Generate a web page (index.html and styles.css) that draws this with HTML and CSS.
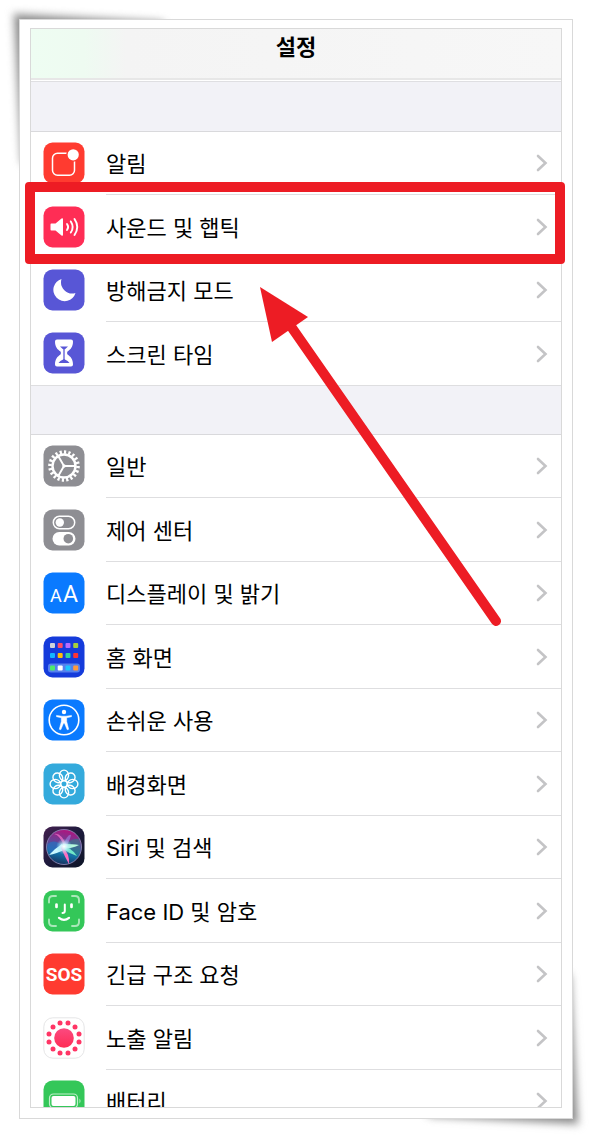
FILE: index.html
```html
<!DOCTYPE html>
<html lang="ko">
<head>
    <meta charset="UTF-8">
    <meta name="viewport" content="width=device-width, initial-scale=1.0">
    <title>설정</title>
    <link rel="stylesheet" href="styles.css">
</head>
<body>
<!-- Símbolos compartidos -->
<svg class="defs" width="0" height="0" aria-hidden="true">
    <defs>
        <symbol id="chevron" viewBox="0 0 12 18">
            <path d="M2 2 L9.500 9 L2 16" fill="none" stroke="#c4c4c6" stroke-width="2.600" stroke-linecap="round" stroke-linejoin="miter"/>
        </symbol>
        <ellipse id="petal" cx="21" cy="12.300" rx="4.600" ry="5.200"/>
        <linearGradient id="siriBg" x1="0" y1="0" x2="1" y2="1">
            <stop offset="0" stop-color="#43204f"/>
            <stop offset="0.500" stop-color="#1d1a3c"/>
            <stop offset="1" stop-color="#0d1526"/>
        </linearGradient>
        <linearGradient id="siriOrb" x1="0.600" y1="0" x2="0.400" y2="1">
            <stop offset="0" stop-color="#b3127e"/>
            <stop offset="0.450" stop-color="#5a4b9b"/>
            <stop offset="0.700" stop-color="#1272a8"/>
            <stop offset="1" stop-color="#17315e"/>
        </linearGradient>
        <radialGradient id="siriGlow">
            <stop offset="0" stop-color="#ffffff"/>
            <stop offset="0.350" stop-color="#d5f6ff" stop-opacity="0.850"/>
            <stop offset="1" stop-color="#7fd8f0" stop-opacity="0"/>
        </radialGradient>
        <linearGradient id="exposure" x1="0" y1="0" x2="0" y2="1">
            <stop offset="0" stop-color="#fb4a80"/>
            <stop offset="1" stop-color="#ff2d55"/>
        </linearGradient>
    </defs>
</svg>

<div class="frame">
    <main class="screen">
        <header class="header">
            <h1>설정</h1>
        </header>

        <ul class="group">
            <li><a class="row" href="#">
                <svg class="icon" viewBox="0 0 42 42">
                    <rect class="tile red" x="0.500" y="0.500" width="41" height="41" rx="9"/>
                    <rect x="9.500" y="11.300" width="22" height="22" rx="5" fill="none" stroke="#fff" stroke-width="1.500"/>
                    <circle cx="30.200" cy="12.800" r="7" fill="#ff3b30"/>
                    <circle cx="30.200" cy="12.800" r="5.600" fill="#fff"/>
                </svg>
                <span class="label">알림<svg class="chevron"><use href="#chevron"/></svg></span>
            </a></li>
            <li><a class="row" href="#">
                <svg class="icon" viewBox="0 0 42 42">
                    <rect class="tile pink" x="0.500" y="0.500" width="41" height="41" rx="9"/>
                    <path d="M8.300 17.500 H12.500 L18.500 12.600 Q20 11.700 20 13.500 V28.500 Q20 30.300 18.500 29.400 L12.500 24.500 H8.300 Q7.500 24.500 7.500 23.500 V18.500 Q7.500 17.500 8.300 17.500Z" fill="#fff"/>
                    <g fill="none" stroke="#fff" stroke-width="1.900" stroke-linecap="round">
                        <path d="M24 18 Q26.300 21 24 24"/>
                        <path d="M27.800 15.400 Q31.500 21 27.800 26.600"/>
                        <path d="M31.500 13 Q37 21 31.500 29"/>
                    </g>
                </svg>
                <span class="label">사운드 및 햅틱<svg class="chevron"><use href="#chevron"/></svg></span>
            </a></li>
            <li><a class="row" href="#">
                <svg class="icon" viewBox="0 0 42 42">
                    <rect class="tile purple" x="0.500" y="0.500" width="41" height="41" rx="9"/>
                    <path d="M18.500 10 A11.300 11.300 0 1 0 32.500 24 A11.300 11.300 0 0 1 18.500 10Z" fill="#fff"/>
                </svg>
                <span class="label">방해금지 모드<svg class="chevron"><use href="#chevron"/></svg></span>
            </a></li>
            <li><a class="row" href="#">
                <svg class="icon" viewBox="0 0 42 42">
                    <rect class="tile purple" x="0.500" y="0.500" width="41" height="41" rx="9"/>
                    <path d="M14 7.500 H28 Q30 7.500 30 9.500 C30 15 27.500 17.500 24.500 19.500 Q23.500 21 24.500 22.500 C27.500 24.500 30 27 30 32.500 Q30 34.500 28 34.500 H14 Q12 34.500 12 32.500 C12 27 14.500 24.500 17.500 22.500 Q18.500 21 17.500 19.500 C14.500 17.500 12 15 12 9.500 Q12 7.500 14 7.500Z" fill="#fff"/>
                    <path d="M17 14.500 H25 L22 17.200 H20Z M15.500 31 Q16.500 28.800 21 27 Q25.500 28.800 26.500 31Z" fill="#5856d6"/>
                    <path d="M21 15 V29" stroke="#5856d6" stroke-width="1.300"/>
                </svg>
                <span class="label">스크린 타임<svg class="chevron"><use href="#chevron"/></svg></span>
            </a></li>
        </ul>

        <ul class="group">
            <li><a class="row" href="#">
                <svg class="icon" viewBox="0 0 42 42">
                    <rect class="tile gray" x="0.500" y="0.500" width="41" height="41" rx="9"/>
                    <g fill="none" stroke="#fff">
                        <circle cx="21" cy="21" r="14" stroke-width="3.600" pathLength="100" stroke-dasharray="2.500 2.500"/>
                        <circle cx="21" cy="21" r="11.500" stroke-width="2.400"/>
                        <path d="M21 21 H32 M21 21 L15.500 11.500 M21 21 L15.500 30.500" stroke-width="1.900"/>
                    </g>
                    <circle cx="21" cy="21" r="1.700" fill="#fff"/>
                </svg>
                <span class="label">일반<svg class="chevron"><use href="#chevron"/></svg></span>
            </a></li>
            <li><a class="row" href="#">
                <svg class="icon" viewBox="0 0 42 42">
                    <rect class="tile gray" x="0.500" y="0.500" width="41" height="41" rx="9"/>
                    <rect x="10.300" y="7.300" width="21.400" height="12.400" rx="6.200" fill="none" stroke="#fff" stroke-width="1.500"/>
                    <circle cx="16.800" cy="13.500" r="4.200" fill="#fff"/>
                    <rect x="9.500" y="23" width="23" height="13.500" rx="6.700" fill="#fff"/>
                    <circle cx="25.300" cy="29.700" r="4.800" fill="#8e8e93"/>
                </svg>
                <span class="label">제어 센터<svg class="chevron"><use href="#chevron"/></svg></span>
            </a></li>
            <li><a class="row" href="#">
                <svg class="icon" viewBox="0 0 42 42">
                    <rect class="tile blue" x="0.500" y="0.500" width="41" height="41" rx="9"/>
                    <text class="letters" x="7" y="30" font-size="18">A</text>
                    <text class="letters" x="20" y="30" font-size="23">A</text>
                </svg>
                <span class="label">디스플레이 및 밝기<svg class="chevron"><use href="#chevron"/></svg></span>
            </a></li>
            <li><a class="row" href="#">
                <svg class="icon" viewBox="0 0 42 42">
                    <rect x="0.500" y="0.500" width="41" height="41" rx="9" fill="#153bdb"/>
                    <rect x="5" y="27.500" width="32" height="9" rx="3" fill="#5580ee"/>
                    <g>
                        <rect x="7" y="7" width="5" height="5" rx="1" fill="#cfd3da"/>
                        <rect x="14.700" y="7" width="5" height="5" rx="1" fill="#ff4d67"/>
                        <rect x="22.500" y="7" width="5" height="5" rx="1" fill="#b66bff"/>
                        <rect x="30.200" y="7" width="5" height="5" rx="1" fill="#a6cf3d"/>
                        <rect x="7" y="17" width="5" height="5" rx="1" fill="#14b5ff"/>
                        <rect x="14.700" y="17" width="5" height="5" rx="1" fill="#ffbd0a"/>
                        <rect x="22.500" y="17" width="5" height="5" rx="1" fill="#31d2a0"/>
                        <rect x="30.200" y="17" width="5" height="5" rx="1" fill="#ff3434"/>
                        <rect x="7" y="29.500" width="5" height="5" rx="1" fill="#4fec6a"/>
                        <rect x="14.700" y="29.500" width="5" height="5" rx="1" fill="#fff"/>
                        <rect x="22.500" y="29.500" width="5" height="5" rx="1" fill="#1bc5ff"/>
                        <rect x="30.200" y="29.500" width="5" height="5" rx="1" fill="#ff9a3c"/>
                    </g>
                </svg>
                <span class="label">홈 화면<svg class="chevron"><use href="#chevron"/></svg></span>
            </a></li>
            <li><a class="row" href="#">
                <svg class="icon" viewBox="0 0 42 42">
                    <rect class="tile blue" x="0.500" y="0.500" width="41" height="41" rx="9"/>
                    <circle cx="21" cy="21" r="14.800" fill="none" stroke="#fff" stroke-width="1.600"/>
                    <circle cx="21" cy="13" r="2.200" fill="#fff"/>
                    <path d="M13.500 16.400 L19 17.200 H23 L28.500 16.400 V17.700 L23.700 18.700 V22.500 L25.700 30.300 L24.200 30.700 L21.500 24.300 H20.500 L17.800 30.700 L16.300 30.300 L18.300 22.500 V18.700 L13.500 17.700Z" fill="#fff" stroke="#fff" stroke-width="0.500" stroke-linejoin="round"/>
                </svg>
                <span class="label">손쉬운 사용<svg class="chevron"><use href="#chevron"/></svg></span>
            </a></li>
            <li><a class="row" href="#">
                <svg class="icon" viewBox="0 0 42 42">
                    <rect x="0.500" y="0.500" width="41" height="41" rx="9" fill="#34aadc"/>
                    <g fill="none" stroke="#fff" stroke-width="1.400">
                        <use href="#petal"/>
                        <use href="#petal" transform="rotate(45 21 21)"/>
                        <use href="#petal" transform="rotate(90 21 21)"/>
                        <use href="#petal" transform="rotate(135 21 21)"/>
                        <use href="#petal" transform="rotate(180 21 21)"/>
                        <use href="#petal" transform="rotate(225 21 21)"/>
                        <use href="#petal" transform="rotate(270 21 21)"/>
                        <use href="#petal" transform="rotate(315 21 21)"/>
                        <circle cx="21" cy="21" r="3.200"/>
                    </g>
                </svg>
                <span class="label">배경화면<svg class="chevron"><use href="#chevron"/></svg></span>
            </a></li>
            <li><a class="row" href="#">
                <svg class="icon" viewBox="0 0 42 42">
                    <rect x="0.500" y="0.500" width="41" height="41" rx="9" fill="url(#siriBg)"/>
                    <circle cx="21" cy="21" r="17.500" fill="url(#siriOrb)" stroke="#8a87b5" stroke-width="0.900"/>
                    <path d="M22 20 Q29 11 36 13 Q40 23 34 31 Q28 28 22 20Z" fill="#1d8d87" opacity="0.500"/>
                    <path d="M21 20 Q10 12 5 18 Q4 23 8 28Z" fill="#286fc0" opacity="0.700"/>
                    <path d="M21 20 Q16 8 11 8 Q18 6 24 20Z" fill="#f06cc5" opacity="0.800"/>
                    <path d="M20 20 Q25 7 28 9 Q27 14 23 21Z" fill="#9b7bd8" opacity="0.700"/>
                    <path d="M19 18 Q11 23 6 29 Q13 28 23 23Z" fill="#c9f8ff"/>
                    <path d="M20 18 Q30 18 36 19 Q30 22 21 23Z" fill="#b5f8dc"/>
                    <path d="M20 21 Q28 21 34 30 Q27 28 20 23Z" fill="#6fe8c8"/>
                    <path d="M19 20 Q27 28 26 38 Q22 31 18 22Z" fill="#ff6cc0"/>
                    <circle cx="21" cy="20.500" r="8" fill="url(#siriGlow)"/>
                </svg>
                <span class="label">Siri 및 검색<svg class="chevron"><use href="#chevron"/></svg></span>
            </a></li>
            <li><a class="row" href="#">
                <svg class="icon" viewBox="0 0 42 42">
                    <rect class="tile green" x="0.500" y="0.500" width="41" height="41" rx="9"/>
                    <g fill="none" stroke-linecap="round">
                        <path d="M6 12.500 V10 Q6 6 10 6 H13 M29 6 H32 Q36 6 36 10 V12.500 M36 29.500 V32 Q36 36 32 36 H29 M13 36 H10 Q6 36 6 32 V29.500" stroke="#a9e8b9" stroke-width="1.900"/>
                        <path d="M13.500 14.500 V17 M28.500 14.500 V17" stroke="#fff" stroke-width="2.700"/>
                        <path d="M21.800 14.500 V21 Q21.800 23 19.500 23" stroke="#fff" stroke-width="2"/>
                        <path d="M16 27.800 Q21 32 26 27.800" stroke="#fff" stroke-width="2.200"/>
                    </g>
                </svg>
                <span class="label">Face ID 및 암호<svg class="chevron"><use href="#chevron"/></svg></span>
            </a></li>
            <li><a class="row" href="#">
                <svg class="icon" viewBox="0 0 42 42">
                    <rect class="tile red" x="0.500" y="0.500" width="41" height="41" rx="9"/>
                    <text class="sos" x="21" y="28" text-anchor="middle">SOS</text>
                </svg>
                <span class="label">긴급 구조 요청<svg class="chevron"><use href="#chevron"/></svg></span>
            </a></li>
            <li><a class="row" href="#">
                <svg class="icon" viewBox="0 0 42 42">
                    <rect x="0.800" y="0.800" width="40.400" height="40.400" rx="9" fill="#fff" stroke="#dedee0" stroke-width="0.800"/>
                    <g fill="#ff3565">
                        <circle cx="21" cy="21" r="9.800" fill="url(#exposure)"/>
                        <circle cx="36" cy="17" r="2.500"/>
                        <circle cx="32" cy="10" r="2.500"/>
                        <circle cx="25" cy="6" r="2.500"/>
                        <circle cx="17" cy="6" r="2.500"/>
                        <circle cx="10" cy="10" r="2.500"/>
                        <circle cx="6" cy="17" r="2.500"/>
                        <circle cx="6" cy="25" r="2.500"/>
                        <circle cx="10" cy="32" r="2.500"/>
                        <circle cx="17" cy="36" r="2.500"/>
                        <circle cx="25" cy="36" r="2.500"/>
                        <circle cx="32" cy="32" r="2.500"/>
                        <circle cx="36" cy="25" r="2.500"/>
                    </g>
                </svg>
                <span class="label">노출 알림<svg class="chevron"><use href="#chevron"/></svg></span>
            </a></li>
            <li><a class="row" href="#">
                <svg class="icon" viewBox="0 0 42 42">
                    <rect class="tile green" x="0.500" y="0.500" width="41" height="41" rx="9"/>
                    <rect x="6.500" y="14" width="28" height="14" rx="4" fill="none" stroke="#c0efcb" stroke-width="1.200"/>
                    <rect x="8.500" y="16" width="24" height="10" rx="2" fill="#fff"/>
                    <path d="M36.500 18.500 Q38.500 21 36.500 23.500Z" fill="#c0efcb"/>
                </svg>
                <span class="label">배터리<svg class="chevron"><use href="#chevron"/></svg></span>
            </a></li>
        </ul>
    </main>

    <!-- Marcas sobre la pantalla -->
    <div class="highlight"></div>
    <svg class="arrow" width="260" height="360" viewBox="0 0 260 360" aria-hidden="true">
        <path d="M40 46 L246 342" stroke="#ed1c24" stroke-width="10" stroke-linecap="round"/>
        <path d="M10 8 L58 38 L22 63Z" fill="#ed1c24"/>
    </svg>
</div>
</body>
</html>
```
FILE: styles.css
```css
* {
    box-sizing: border-box;
}
body {
    font-family: Inter, "Noto Sans CJK KR", sans-serif;
    margin: 0;
    padding: 19px;
    height: 100vh;
    background: #fff;
    color: #000;
}
.defs {
    position: absolute;
}
.frame {
    position: relative;
    display: flex;
    height: 100%;
    padding: 8px 10px 10px;
    background: #fff;
    border: 1px solid #d9d9d9;
}
/* esquinas levantadas */
.frame::before,
.frame::after {
    content: "";
    position: absolute;
    z-index: -1;
    width: 150px;
    height: 150px;
    background: #8a8a8a;
    filter: blur(4px);
    transform: skew(3deg, 3deg);
}
.frame::before {
    top: -6px;
    left: -6px;
    transform-origin: top left;
}
.frame::after {
    right: -6px;
    bottom: -6px;
    transform-origin: bottom right;
}
.screen {
    flex: 1;
    overflow: hidden;
    background: #f2f2f7;
    border: 1px solid #d9d9d9;
}
.header {
    height: 51px;
    padding-top: 2px;
    text-align: center;
    background: linear-gradient(to right, #eefdf2 0%, #eefbf1 10%, #f4f4f4 18%, #f7f7f7 100%);
    border-bottom: 2px solid #e7e7e7;
    box-shadow: 0 1px #fff, 0 2px #dfdfe2;
}
h1 {
    margin: 0;
    font-size: 22px;
    line-height: 32px;
    font-weight: 600;
}
.group {
    list-style: none;
    margin: 51px 0 0;
    padding: 0;
    background: #fff;
    border-top: 1px solid #d9d9dc;
}
.group + .group {
    margin-top: 48px;
}
.row {
    display: flex;
    align-items: center;
    height: 63px;
    padding-left: 12px;
    color: inherit;
    text-decoration: none;
}
li:nth-child(even) .row {
    height: 64px;
}
.icon {
    flex: none;
    width: 42px;
    height: 42px;
    margin: 0 21px 1px 0;
}
.label {
    flex: 1;
    display: flex;
    align-items: center;
    justify-content: space-between;
    height: 100%;
    padding: 2px 13px 0 0;
    font-size: 22px;
    line-height: 32px;
    white-space: pre;
    border-bottom: 1px solid #dedee0;
}
li:last-child .row {
    border-bottom: 1px solid #dedee0;
}
li:last-child .label {
    border-bottom: none;
}
.chevron {
    flex: none;
    width: 12px;
    height: 18px;
    margin-bottom: 2px;
}
.red {
    fill: #ff3b30;
}
.pink {
    fill: #ff2d55;
}
.purple {
    fill: #5856d6;
}
.gray {
    fill: #8e8e93;
}
.blue {
    fill: #0a7aff;
}
.green {
    fill: #34c759;
}
.letters {
    font-family: Roboto, sans-serif;
    fill: #fff;
}
.sos {
    font-family: "Liberation Sans Narrow", Roboto, sans-serif;
    font-size: 19px;
    font-weight: 700;
    fill: #fff;
}
.highlight {
    position: absolute;
    top: 162px;
    left: 5px;
    right: 7px;
    height: 82px;
    border: 10px solid #ed1c24;
    border-radius: 4px;
}
.arrow {
    position: absolute;
    top: 259px;
    left: 230px;
}
```
